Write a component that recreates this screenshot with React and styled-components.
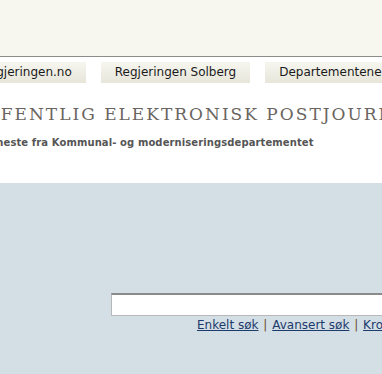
import React from "react";
import styled, { createGlobalStyle } from "styled-components";

const Global = createGlobalStyle`
  html, body { margin: 0; padding: 0; background: #d3dfe5; overflow: hidden; }
  body { font-family: "DejaVu Sans", Verdana, sans-serif; }
`;

const Page = styled.div`
  width: 382px;
  overflow: hidden;
`;

const TopBar = styled.div`
  height: 56px;
  background: #f7f7ef;
  border-bottom: 1px solid #8c8c88;
`;

const Header = styled.div`
  background: #fff;
  height: 126px;
  overflow: hidden;
`;

const Nav = styled.nav`
  display: flex;
  gap: 15px;
  margin-left: -33px;
  padding-top: 5px;
  white-space: nowrap;
`;

const Tab = styled.a`
  display: block;
  height: 21px;
  line-height: 21px;
  padding: 0 14px;
  font-size: 12px;
  color: #1a1a1a;
  text-decoration: none;
  background: linear-gradient(#f6f6f0, #e8e6da);
  flex: none;
`;

const Title = styled.h1`
  margin: 21px 0 0 -29px;
  font-family: "DejaVu Serif", Georgia, serif;
  font-weight: normal;
  font-size: 17px;
  letter-spacing: 2px;
  line-height: 20px;
  color: #6a6560;
  white-space: nowrap;
`;

const Subtitle = styled.p`
  margin: 13px 0 0 -21px;
  font-size: 10px;
  font-weight: bold;
  letter-spacing: 0.1px;
  color: #555;
  white-space: nowrap;
`;

const SearchArea = styled.div`
  padding: 110px 0 0 111px;
`;

const SearchInput = styled.input`
  display: block;
  box-sizing: border-box;
  width: 320px;
  height: 23px;
  border: 1px solid #b8b8b8;
  border-top: 2px solid #8a8a8a;
  border-right: none;
  background: #fff;
  outline: none;
`;

const Links = styled.div`
  margin: 2px 0 0 86px;
  font-size: 12px;
  color: #6b4e2e;
  white-space: nowrap;
`;

const Sep = styled.span`
  margin: 0 1px;
`;

const Link = styled.a`
  color: #1d3a6c;
  text-decoration: underline;
`;

export default function App() {
  return (
    <Page>
      <Global />
      <TopBar />
      <Header>
        <Nav>
          <Tab>Regjeringen.no</Tab>
          <Tab>Regjeringen Solberg</Tab>
          <Tab>Departementene</Tab>
        </Nav>
        <Title>OFFENTLIG ELEKTRONISK POSTJOURNAL</Title>
        <Subtitle>Tjeneste fra Kommunal- og moderniseringsdepartementet</Subtitle>
      </Header>
      <SearchArea>
        <SearchInput type="text" />
        <Links>
          <Link>Enkelt søk</Link> <Sep>|</Sep> <Link>Avansert søk</Link> <Sep>|</Sep> <Link>Kronologisk</Link>
        </Links>
      </SearchArea>
    </Page>
  );
}
